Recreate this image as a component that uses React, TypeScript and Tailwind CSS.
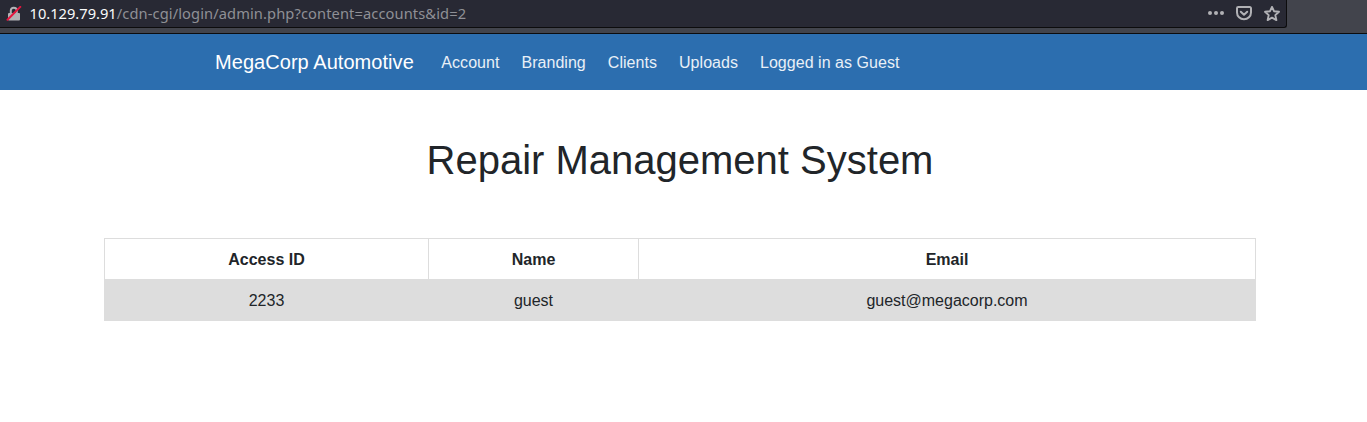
const navItems = ['Account', 'Branding', 'Clients', 'Uploads', 'Logged in as Guest'];

function InsecureLock() {
  return (
    <svg className="h-4 w-4 shrink-0" viewBox="0 0 16 16" fill="none">
      <path d="M4.8 8V4.6a3 2.8 0 0 1 6 0V8" stroke="#b1b1b5" strokeWidth="2" />
      <rect x="2" y="7" width="12" height="7.5" rx="1" fill="#b1b1b5" />
      <path d="M1.5 13.8L14.3 0.9" stroke="#e6153f" strokeWidth="2" strokeLinecap="round" />
    </svg>
  );
}

function Dots() {
  return (
    <svg className="h-4 w-4" viewBox="0 0 16 16" fill="#b1b1b5">
      <circle cx="2" cy="7" r="2" />
      <circle cx="8" cy="7" r="2" />
      <circle cx="14" cy="7" r="2" />
    </svg>
  );
}

function Pocket() {
  return (
    <svg className="h-4 w-4" viewBox="0 0 16 16" fill="none" stroke="#b1b1b5" strokeWidth="2" strokeLinecap="round" strokeLinejoin="round">
      <path d="M2.2 1h11.6a1.2 1.2 0 0 1 1.2 1.2V6.5a7 6.8 0 0 1-14 0V2.2A1.2 1.2 0 0 1 2.2 1z" />
      <path d="M4.8 5.7L8 8.7l3.2-3" />
    </svg>
  );
}

function Star() {
  return (
    <svg className="h-4 w-4" viewBox="0 0 16 16" fill="none" stroke="#b1b1b5" strokeWidth="1.9" strokeLinejoin="round">
      <path d="M8 0.9l2 4.3 5 .6-3.7 3.3 1.1 5L8 11.6l-4.4 2.5 1.1-5L1 5.8l5-.6z" />
    </svg>
  );
}

export default function App() {
  return (
    <div className="h-[422px] overflow-hidden bg-white font-['Liberation_Sans',sans-serif] text-base text-[#212529]">
      <div className="h-[34px] border-b border-[#0c0c0d] bg-[#42444c]">
        <div className="flex h-7 w-[1287px] items-center rounded-br-[3px] border-r border-b border-[#0c0c0d] bg-[#282934] pr-[6px] pl-[6px]">
          <InsecureLock />
          <div className="ml-[7.5px] flex-1 pb-0.5 font-['Noto_Sans',sans-serif] text-[14.67px] leading-5 tracking-[0.1px] text-[#8f9096]">
            <span className="tracking-normal text-[#f9f9fa]">10.129.79.91</span>/cdn-cgi/login/admin.php?content=accounts&amp;id=2
          </div>
          <div className="flex items-center gap-3">
            <Dots />
            <Pocket />
            <Star />
          </div>
        </div>
      </div>
      <nav className="flex h-14 items-center bg-[#2c6eaf] pl-[215px]">
        <a className="text-xl tracking-[0.05px] text-white">MegaCorp Automotive</a>
        <div className="ml-[27.5px] flex gap-[22px] pt-0.5 tracking-[0.04px] text-[#e9f0f7]">
          {navItems.map((item) => (
            <a key={item}>{item}</a>
          ))}
        </div>
      </nav>
      <main className="ml-[104px] w-[1152px]">
        <h1 className="pt-[46px] text-center text-[40px] leading-12">Repair Management System</h1>
        <table className="mt-[54px] w-full table-fixed border-collapse border border-[#dddddd] text-center leading-6">
          <colgroup>
            <col className="w-[324px]" />
            <col className="w-[210px]" />
            <col />
          </colgroup>
          <thead>
            <tr>
              <th className="border border-[#dddddd] px-2 pt-[9px] pb-[7px]">Access ID</th>
              <th className="border border-[#dddddd] px-2 pt-[9px] pb-[7px]">Name</th>
              <th className="border border-[#dddddd] px-2 pt-[9px] pb-[7px]">Email</th>
            </tr>
          </thead>
          <tbody>
            <tr className="bg-[#dddddd]">
              <td className="border border-[#dddddd] px-2 pt-[9px] pb-[7px]">2233</td>
              <td className="border border-[#dddddd] px-2 pt-[9px] pb-[7px]">guest</td>
              <td className="border border-[#dddddd] px-2 pt-[9px] pb-[7px]">guest@megacorp.com</td>
            </tr>
          </tbody>
        </table>
      </main>
    </div>
  );
}
